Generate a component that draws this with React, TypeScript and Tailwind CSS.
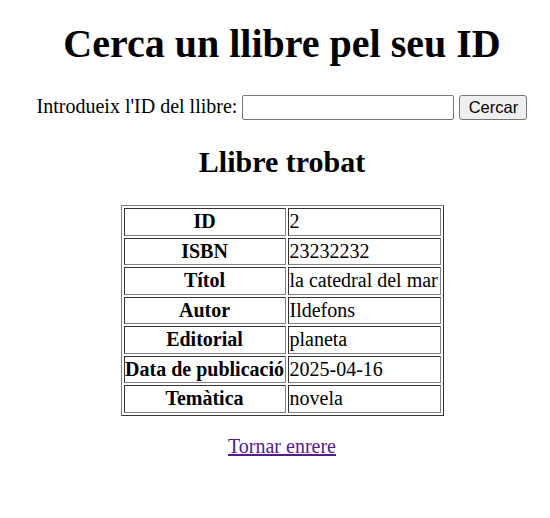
import { useState } from 'react'

const book: [string, string][] = [
  ['ID', '2'],
  ['ISBN', '23232232'],
  ['Títol', 'la catedral del mar'],
  ['Autor', 'Ildefons'],
  ['Editorial', 'planeta'],
  ['Data de publicació', '2025-04-16'],
  ['Temàtica', 'novela'],
]

export default function App() {
  const [id, setId] = useState('')

  return (
    <div className="min-h-screen w-full bg-white pl-[14px] text-black font-['Liberation_Serif',serif]">
      <div className="flex flex-col items-center">
        <h1 className="mt-[21px] text-[40px] leading-[46px] font-bold">Cerca un llibre pel seu ID</h1>

        {/* Search form */}
        <form
          className="mt-[28px] flex items-center h-[25px]"
          onSubmit={e => e.preventDefault()}
        >
          <label htmlFor="id" className="text-[20px] leading-[23px] -mt-[2px]">Introdueix l'ID del llibre:</label>
          <input
            id="id"
            value={id}
            onChange={e => setId(e.target.value)}
            className="ml-[5px] w-[212px] h-[25px] rounded-[2px] border border-[#767676] bg-white px-[2px] text-[16px] outline-none"
          />
          <button
            type="submit"
            className="ml-[5px] w-[68px] h-[25px] rounded-[3px] border border-[#767676] bg-[#efefef] text-[16.5px] leading-none font-['Liberation_Sans',Arial,sans-serif] hover:bg-[#e5e5e5]"
          >
            Cercar
          </button>
        </form>

        <h2 className="mt-[24px] text-[30px] leading-[35px] font-bold">Llibre trobat</h2>

        {/* Book table */}
        <table className="mt-[26px] border-separate border-spacing-[2px] border border-t-[#808080] border-l-[#808080] border-r-[#333] border-b-[#333] text-[20px] leading-[23px]">
          <tbody>
            {book.map(([k, v]) => (
              <tr key={k}>
                <th className="w-[162px] h-[27.5px] p-0 border border-t-[#333] border-l-[#333] border-r-[#808080] border-b-[#808080] text-center font-bold whitespace-nowrap">
                  {k}
                </th>
                <td className="w-[153px] h-[27.5px] py-0 px-px border border-t-[#333] border-l-[#333] border-r-[#808080] border-b-[#808080] text-left whitespace-nowrap">
                  {v}
                </td>
              </tr>
            ))}
          </tbody>
        </table>

        <a href="#" className="mt-[19px] text-[20px] leading-[23px] text-[#551a8b] underline">Tornar enrere</a>
      </div>
    </div>
  )
}
